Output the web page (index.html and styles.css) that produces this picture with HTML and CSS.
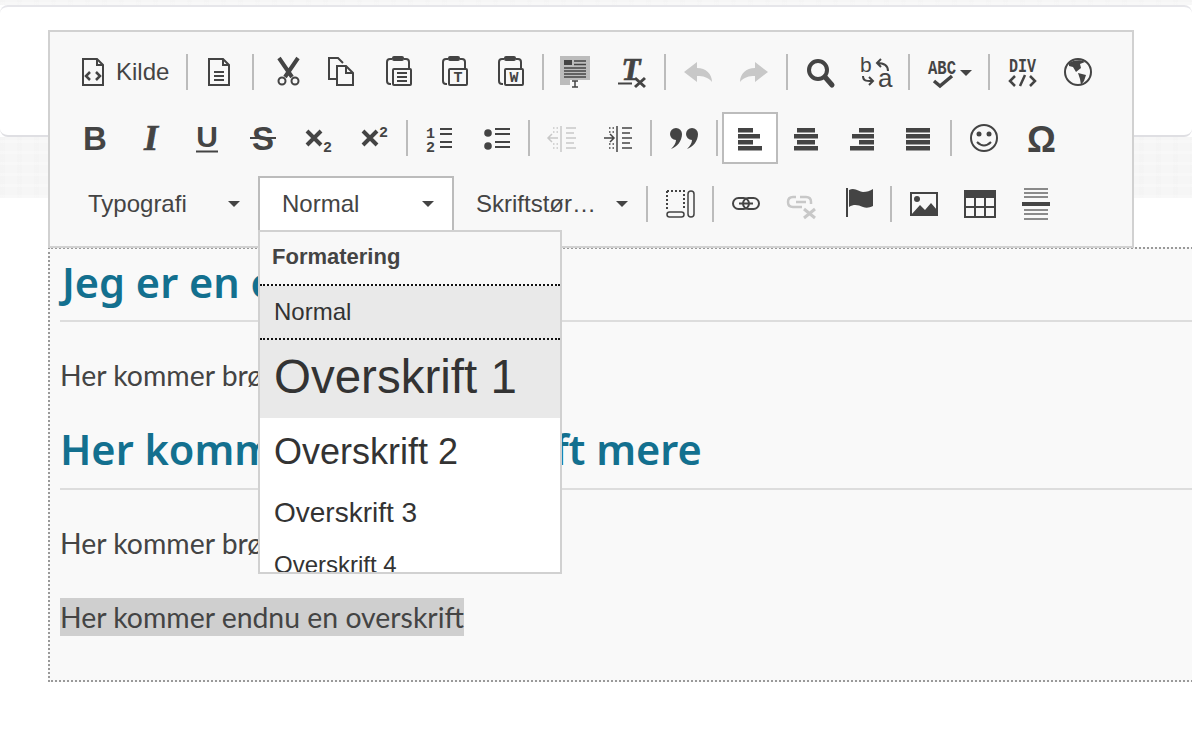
FILE: index.html
```html
<!DOCTYPE html>
<html lang="da">
<head>
<meta charset="utf-8">
<title>Editor</title>
<link rel="stylesheet" href="styles.css">
</head>
<body>
<div class="backdrop">
  <div class="strip strip-top"></div>
  <div class="card card-top"></div>
  <div class="strip strip-mid"></div>
  <div class="card card-bottom"></div>
</div>
<main class="page">
  <div class="toolbar">
    <div class="row">
      <button class="btn btn-source">
        <svg class="ic" viewBox="0 0 40 40"><path d="M11 7H25L31 13V33H11Z M25 7V13H31"/><path class="s25" d="M18 20L14 24L18 28M24 20L28 24L24 28"/></svg>
        <span class="label">Kilde</span>
      </button>
      <i class="sep"></i>
      <button class="btn"><svg class="ic" viewBox="0 0 40 40"><path d="M9 7H23L29 13V33H9Z M23 7V13H29"/><path d="M14 20H24M14 24H24M14 28H24"/></svg></button>
      <i class="sep"></i>
      <button class="btn"><svg class="ic" viewBox="0 0 40 40"><path class="s4" d="M13 6L26 25M32 6L19 25"/><circle cx="16" cy="29" r="3.5"/><circle cx="29" cy="29" r="3.5"/></svg></button>
      <button class="btn"><svg class="ic" viewBox="0 0 40 40"><path d="M14 27H7V6H16L21 11"/><path d="M15 14H24L31 21V33H15Z M24 14V21H31"/></svg></button>
      <button class="btn"><svg class="ic" viewBox="0 0 40 40"><path d="M14 7H12Q9 7 9 10V29Q9 32 12 32H13M26 7H28Q31 7 31 10V16"/><rect class="f" x="14" y="4" width="12" height="5" rx="2"/><rect x="15" y="17" width="18" height="16" rx="1"/><path d="M19 21H29M19 25H29M19 29H29"/></svg></button>
      <button class="btn"><svg class="ic" viewBox="0 0 40 40"><path d="M14 7H12Q9 7 9 10V29Q9 32 12 32H13M26 7H28Q31 7 31 10V16"/><rect class="f" x="14" y="4" width="12" height="5" rx="2"/><rect x="15" y="17" width="18" height="16" rx="1"/><text class="t mono" x="24" y="30" font-size="15">T</text></svg></button>
      <button class="btn"><svg class="ic" viewBox="0 0 40 40"><path d="M14 7H12Q9 7 9 10V29Q9 32 12 32H13M26 7H28Q31 7 31 10V16"/><rect class="f" x="14" y="4" width="12" height="5" rx="2"/><rect x="15" y="17" width="18" height="16" rx="1"/><text class="t mono" x="24" y="30" font-size="15">W</text></svg></button>
      <i class="sep"></i>
      <button class="btn"><svg class="ic" viewBox="0 0 40 40"><rect class="gray" x="4" y="4" width="30" height="24"/><rect class="gray" x="4" y="28" width="10" height="5"/><rect class="f" x="8" y="8" width="8" height="5"/><path class="s15" d="M18 9H30M18 12.500H30M8 16H30M8 19H30M8 22H30M8 25H30M16 29H22M19 29V35M16 35H22"/></svg></button>
      <button class="btn"><svg class="ic" viewBox="0 0 40 40"><text class="t serif-bi heavy" x="19" y="28" font-size="31">T</text><path d="M6 31.500H20"/><path class="s3" d="M23 26L33 35M33 26L23 35"/></svg></button>
      <i class="sep"></i>
      <button class="btn off"><svg class="ic" viewBox="0 0 40 40"><path class="f" d="M6 20L19 10V16C28 16 34 22 34 30C30 25 25 24 19 24V30Z"/></svg></button>
      <button class="btn off"><svg class="ic" viewBox="0 0 40 40"><path class="f" d="M34 20L21 10V16C12 16 6 22 6 30C10 25 15 24 21 24V30Z"/></svg></button>
      <i class="sep"></i>
      <button class="btn"><svg class="ic" viewBox="0 0 40 40"><circle class="s4" cx="18" cy="18" r="9"/><path class="s5" d="M25 25L32 33"/></svg></button>
      <button class="btn"><svg class="ic" viewBox="0 0 40 40"><text class="t-start sans" x="4" y="20" font-size="21">b</text><text class="t-start sans" x="22" y="35" font-size="26">a</text><path d="M32 19C32 13 28 11 21 11M25 7L21 11L25 15"/><path d="M7 24C7 29 10 29 16 29M13 25L17 29L13 33"/></svg></button>
      <i class="sep"></i>
      <button class="btn btn-spell"><svg class="ic ic-spell" viewBox="0 0 70 40"><text class="t-start mono" x="14" y="22" font-size="21" textLength="28" lengthAdjust="spacingAndGlyphs">ABC</text><path class="s35" d="M20 29L26 34L38 24"/><polygon class="f" points="46,18 58,18 52,24"/></svg></button>
      <i class="sep"></i>
      <button class="btn"><svg class="ic" viewBox="0 0 40 40"><text class="t-start mono" x="7" y="20" font-size="21" textLength="27" lengthAdjust="spacingAndGlyphs">DIV</text><path class="s25" d="M13 24L8 29L13 34M23 23L18 34M28 24L33 29L28 34"/></svg></button>
      <button class="btn"><svg class="ic" viewBox="0 0 40 40"><circle cx="20" cy="20" r="13"/><path class="f" d="M11 11C15 8 23 7 27 10L22 12L23 16L18 20L15 15L11 14Z"/><path class="f" d="M20 21L28 23L26 29L23 33L22 27Z"/></svg></button>
    </div>
    <div class="row row-two">
      <button class="btn"><svg class="ic" viewBox="0 0 40 40"><text class="t sans-b" x="20" y="32" font-size="33">B</text></svg></button>
      <button class="btn"><svg class="ic" viewBox="0 0 40 40"><text class="t serif-bi heavy" x="20" y="32" font-size="36">I</text></svg></button>
      <button class="btn"><svg class="ic" viewBox="0 0 40 40"><text class="t sans-b" x="20" y="29" font-size="30">U</text><path d="M9 33.500H31"/></svg></button>
      <button class="btn"><svg class="ic" viewBox="0 0 40 40"><text class="t sans-b" x="20" y="32" font-size="33">S</text><path d="M7 20H33"/></svg></button>
      <button class="btn"><svg class="ic" viewBox="0 0 40 40"><path class="s4" d="M8 13L22 27M22 13L8 27"/><text class="t-start mono" x="24" y="34" font-size="15">2</text></svg></button>
      <button class="btn"><svg class="ic" viewBox="0 0 40 40"><path class="s4" d="M8 13L22 27M22 13L8 27"/><text class="t-start mono" x="24" y="19" font-size="15">2</text></svg></button>
      <i class="sep"></i>
      <button class="btn"><svg class="ic" viewBox="0 0 40 40"><text class="t-start mono" x="5" y="20" font-size="15">1</text><text class="t-start mono" x="5" y="34" font-size="15">2</text><path d="M19 11H31M19 16H31M19 24H31M19 29H31"/></svg></button>
      <button class="btn"><svg class="ic" viewBox="0 0 40 40"><circle class="f" cx="11" cy="15" r="3.800"/><circle class="f" cx="11" cy="28" r="3.800"/><path d="M18 11H33M18 16H33M18 24H33M18 29H33"/></svg></button>
      <i class="sep"></i>
      <button class="btn off"><svg class="ic" viewBox="0 0 40 40"><path class="s15" d="M5 20H15M9 16L5 20L9 24M18 8V34M23 10H33M23 15H31M23 20H33M23 25H31M23 30H33"/><path class="dots" d="M10 10H15M10 14H15M10 26H15M10 30H15"/></svg></button>
      <button class="btn"><svg class="ic" viewBox="0 0 40 40"><path class="s15" d="M5 20H15M11 16L15 20L11 24M18 8V34M23 10H33M23 15H31M23 20H33M23 25H31M23 30H33"/><path class="dots" d="M10 10H15M10 14H15M10 26H15M10 30H15"/></svg></button>
      <i class="sep"></i>
      <button class="btn"><svg class="ic" viewBox="0 0 40 40"><path class="f" d="M11 10A6 6 0 0 1 17 16C17 23 12 29 6 31C9 28 11 25 11 22A6 6 0 0 1 11 10Z"/><path class="f" d="M27 10A6 6 0 0 1 33 16C33 23 28 29 22 31C25 28 27 25 27 22A6 6 0 0 1 27 10Z"/></svg></button>
      <i class="sep"></i>
      <button class="btn on"><svg class="ic" viewBox="0 0 40 40"><g class="f"><rect x="8" y="10" width="15" height="4.500"/><rect x="8" y="16" width="22" height="4.500"/><rect x="8" y="22" width="15" height="4.500"/><rect x="8" y="28" width="24" height="4.500"/></g></svg></button>
      <button class="btn"><svg class="ic" viewBox="0 0 40 40"><g class="f"><rect x="10" y="10" width="18" height="4.500"/><rect x="7" y="16" width="24" height="4.500"/><rect x="10" y="22" width="18" height="4.500"/><rect x="7" y="28" width="24" height="4.500"/></g></svg></button>
      <button class="btn"><svg class="ic" viewBox="0 0 40 40"><g class="f"><rect x="16" y="10" width="15" height="4.500"/><rect x="9" y="16" width="22" height="4.500"/><rect x="16" y="22" width="15" height="4.500"/><rect x="7" y="28" width="24" height="4.500"/></g></svg></button>
      <button class="btn"><svg class="ic" viewBox="0 0 40 40"><g class="f"><rect x="7" y="10" width="24" height="4.500"/><rect x="7" y="16" width="24" height="4.500"/><rect x="7" y="22" width="24" height="4.500"/><rect x="7" y="28" width="24" height="4.500"/></g></svg></button>
      <i class="sep"></i>
      <button class="btn"><svg class="ic" viewBox="0 0 40 40"><circle cx="19" cy="20" r="13"/><circle class="f" cx="14" cy="16" r="2.500"/><circle class="f" cx="24" cy="16" r="2.500"/><path d="M12 24Q19 31 26 24"/></svg></button>
      <button class="btn"><svg class="ic" viewBox="0 0 40 40"><text class="t sans-b" x="20.500" y="34" font-size="36">Ω</text></svg></button>
    </div>
    <div class="row">
      <div class="combo combo-font"><span class="label">Typografi</span><b class="caret"></b></div>
      <div class="combo combo-open"><span class="label">Normal</span><b class="caret"></b></div>
      <div class="combo combo-size"><span class="label">Skriftstør…</span><b class="caret"></b></div>
      <i class="sep"></i>
      <button class="btn"><svg class="ic" viewBox="0 0 40 40"><path class="dash" d="M7 7H24V26M7 7V26"/><rect class="s15" x="7" y="28" width="17" height="5" rx="2.500"/><rect class="s15" x="28" y="7" width="6" height="26" rx="3"/></svg></button>
      <i class="sep"></i>
      <button class="btn"><svg class="ic" viewBox="0 0 40 40"><rect x="7" y="14" width="16" height="11" rx="5.500"/><rect x="17" y="14" width="16" height="11" rx="5.500"/><path d="M13 19.500H27"/></svg></button>
      <button class="btn off"><svg class="ic" viewBox="0 0 40 40"><path class="s25" d="M14 13H11Q6 13 6 18Q6 23 11 23H20M14 18H24M18 13H24Q29 13 29 18V20"/><path class="s3" d="M22 25L33 34M33 25L22 34"/></svg></button>
      <button class="btn"><svg class="ic" viewBox="0 0 40 40"><path d="M9 4V33"/><path class="f" d="M11 6C17 3 21 8 25 8C29 8 32 7 35 5V22C31 24 28 24 25 23C20 21 16 20 11 23Z"/></svg></button>
      <i class="sep"></i>
      <button class="btn"><svg class="ic" viewBox="0 0 40 40"><rect x="7" y="9" width="26" height="22"/><circle class="f" cx="13" cy="15" r="3"/><path class="f" d="M7 31L16 21L21 26L27 19L33 26V31Z"/></svg></button>
      <button class="btn"><svg class="ic" viewBox="0 0 40 40"><rect class="f" x="4" y="6" width="32" height="8"/><rect x="5" y="7" width="30" height="26"/><path d="M15 14V33M25 14V33M5 23H35"/></svg></button>
      <button class="btn"><svg class="ic" viewBox="0 0 40 40"><path class="thin" d="M8 5H32M8 9H32M8 13H32M8 26H32M8 30H32M8 35H32"/><rect class="f" x="6" y="18" width="28" height="4"/></svg></button>
    </div>
  </div>
  <div class="editor">
    <h1 class="head">Jeg er en overskrift</h1>
    <p class="para para-first">Her kommer brødtekst</p>
    <h2 class="head head-two">Her kommer en overskrift mere</h2>
    <p class="para para-second">Her kommer brødtekst</p>
    <p class="para para-third"><span class="selected">Her kommer endnu en overskrift</span></p>
  </div>
  <div class="menu">
    <div class="menu-title">Formatering</div>
    <div class="menu-item item-normal">Normal</div>
    <div class="menu-item item-h1">Overskrift 1</div>
    <div class="menu-item item-h2">Overskrift 2</div>
    <div class="menu-item item-h3">Overskrift 3</div>
    <div class="menu-item item-h4">Overskrift 4</div>
  </div>
</main>
</body>
</html>
```
FILE: styles.css
```css
* { box-sizing: border-box; }
html, body { margin: 0; height: 738px; overflow: hidden; background: #fff; }
body { font-family: "Liberation Sans", Arial, sans-serif; color: #333; position: relative; }

.backdrop { position: absolute; inset: 0; display: flex; flex-direction: column; }
.strip { background-color: #f6f6f6; background-image:
  repeating-linear-gradient(0deg, rgba(255,255,255,.25) 0 3px, transparent 3px 11px),
  repeating-linear-gradient(90deg, rgba(240,240,240,.3) 0 5px, transparent 5px 17px); }
.strip-top { height: 5px; }
.strip-mid { height: 61px; }
.card { background: #fff; border-radius: 8px; }
.card-top { height: 132px; border-top: 2px solid #e6e6ea; border-bottom: 2px solid #dfdfe3; }
.card-bottom { flex: 1; }

.page { position: relative; padding: 30px 0 0 48px; width: 1192px; }

.toolbar { width: 1086px; height: 218px; background: #f8f8f8; border: 2px solid #d1d1d1; padding: 7px 0 0 17px; position: relative; z-index: 1; }
.row { display: flex; align-items: center; height: 66px; }

.btn { width: 56px; height: 52px; padding: 0; border: 0; background: none; display: flex; align-items: center; justify-content: center; color: #444; font: inherit; flex: none; }
.btn.off { color: #c8c8c8; }
.btn.on { background: #fff; border: 2px solid #bcbcbc; margin: 0 1px 0 -1px; }
.btn-source { width: 115px; justify-content: flex-start; padding-left: 5px; gap: 4px; }
.btn-spell { width: 70px; }
.label { font-size: 24px; color: #444; line-height: 28px; white-space: nowrap; }
.sep { width: 2px; height: 36px; margin: 0 4px; background: #bcbcbc; flex: none; }
.row-two .sep { margin: 0 5px 0 3px; }

.ic { width: 40px; height: 40px; fill: none; stroke: currentColor; stroke-width: 2; overflow: visible; flex: none; }
.ic-spell { width: 70px; }
.ic .f { fill: currentColor; stroke: none; }
.ic .gray { fill: #bcbcbc; stroke: none; }
.ic .s15 { stroke-width: 1.5; }
.ic .s25 { stroke-width: 2.5; }
.ic .s3 { stroke-width: 3; }
.ic .s35 { stroke-width: 3.5; }
.ic .s4 { stroke-width: 4; }
.ic .s5 { stroke-width: 5; stroke-linecap: round; }
.ic .thin { stroke-width: 1.5; stroke: #666; }
.ic .dash { stroke-dasharray: 2 2; }
.ic .dots { stroke-dasharray: 1.5 2; stroke-width: 1.5; }
.ic text { fill: currentColor; stroke: none; }
.ic text.heavy { stroke: currentColor; stroke-width: .7; }
.ic .t { text-anchor: middle; }
.ic .t-start { text-anchor: start; }
.ic .mono { font-family: "Liberation Mono", monospace; font-weight: 700; }
.ic .sans { font-family: "Liberation Sans", sans-serif; }
.ic .sans-b { font-family: "Liberation Sans", sans-serif; font-weight: 700; }
.ic .serif-bi { font-family: "Liberation Serif", serif; font-weight: 700; font-style: italic; }

.combo { height: 56px; display: flex; align-items: center; justify-content: space-between; flex: none; }
.combo-font { width: 191px; padding: 0 18px 0 21px; }
.combo-open { width: 196px; padding: 0 18px 0 22px; background: #fff; border: 2px solid #bcbcbc; }
.combo-size { width: 188px; padding: 0 14px 0 22px; }
.caret { width: 0; height: 0; border-style: solid; border-width: 6px 6px 0; border-color: #444 transparent transparent; }

.editor { margin-top: -1px; height: 435px; margin-right: -4px; padding-left: 10px; background: #f9f9f9; border: 2px dotted #999; font-family: Lato, sans-serif; color: #444; }
.head { margin: 0; padding: 6px 0 0 2px; height: 73px; font-family: "Noto Sans", sans-serif; font-size: 41.5px; line-height: 54px; font-weight: 600; color: #13708f; border-bottom: 2px solid #ddd; white-space: nowrap; }
.head-two { height: 73px; padding: 5px 0 0; }
.para { margin: 0; font-size: 28.4px; line-height: 38px; white-space: nowrap; }
.para-first { padding-top: 34px; height: 95px; }
.para-second { padding-top: 34px; height: 72px; }
.para-third { margin-top: 36px; }
.selected { background: #cfcfcf; display: inline-block; }

.menu { position: absolute; left: 258px; top: 230px; width: 304px; height: 344px; background: #fff; border: 2px solid #d1d1d1; overflow: hidden; z-index: 2; color: #333; }
.menu-title { height: 54px; padding: 0 12px; background: #f8f8f8; font-weight: 700; font-size: 22px; line-height: 49px; color: #444; border-bottom: 2px dotted #111; }
.menu-item { padding-left: 14px; white-space: nowrap; }
.item-normal { height: 54px; font-size: 24px; line-height: 52px; background: #e9e9e9; border-bottom: 2px dotted #111; }
.item-h1 { height: 78px; font-size: 47.5px; line-height: 74px; background: #e9e9e9; }
.item-h2 { height: 67px; font-size: 36px; line-height: 67px; }
.item-h3 { height: 55px; font-size: 28px; line-height: 55px; }
.item-h4 { height: 50px; font-size: 24px; line-height: 50px; }
```
